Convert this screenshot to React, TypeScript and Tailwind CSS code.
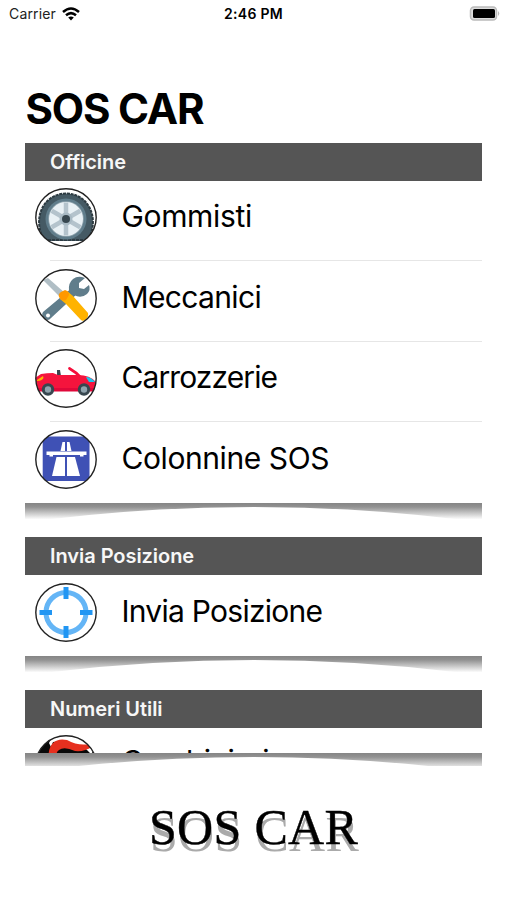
import React from 'react';

const IconCircle = ({ id, children }: { id: string; children: React.ReactNode }) => (
  <svg viewBox="0 0 62 59" className="w-[62px] h-[59px] shrink-0">
    <clipPath id={id}>
      <ellipse cx="31" cy="29.5" rx="30.2" ry="28.8" />
    </clipPath>
    <g clipPath={`url(#${id})`}>{children}</g>
    <ellipse cx="31" cy="29.5" rx="30.2" ry="28.7" fill="none" stroke="#222" strokeWidth="1.4" />
  </svg>
);

const TyreIcon = () => (
  <IconCircle id="tyre">
    <path d="M10 53 C-3 34 6 6 31 5.500 C56 6 65 34 52 53Z" fill="#455a64" />
    <path d="M10 53 C-3 34 6 6 31 5.500 C56 6 65 34 52 53" fill="none" stroke="#2c3a41" strokeWidth="2" strokeDasharray="3 0.8" />
    <path d="M13 52H49" stroke="#263238" strokeWidth="1.5" strokeDasharray="3 1" />
    <circle cx="31" cy="31" r="20.5" fill="#607d8b" />
    <circle cx="31" cy="31" r="17.8" fill="#90a4ae" />
    <circle cx="31" cy="31" r="17" fill="#e9f1f5" />
    <path d="M31 14.500V47.500M16.700 22.700L45.300 39.300M16.700 39.300L45.300 22.700" stroke="#b4c3cc" strokeWidth="4.5" />
    <circle cx="31" cy="31" r="6.5" fill="#a9bac4" />
    <circle cx="31" cy="31" r="4" fill="#37474f" />
  </IconCircle>
);

const ToolsIcon = () => (
  <IconCircle id="tools">
    <path d="M8 11L13 9L30 24L26 29Z" fill="#b0bec5" />
    <path d="M38 18L8 43Q6 46 9 49Q13 53 16 49L43 24Z" fill="#607d8b" />
    <path d="M50 9L44 14L44 19L49 20L54 16Q56 21 52 25Q46 30 39 26L34 22Q33 14 38 10Q43 6 50 9Z" fill="#607d8b" />
    <circle cx="13" cy="46.5" r="2" fill="#fff" />
    <path d="M25 30L32 22L38 27L53 44Q54 48 50 51Q47 53 45 50L31 35Z" fill="#ffb300" />
    <path d="M24 28Q23 25 26 23L30 21Q34 22 34 26L31 31Q27 33 24 28Z" fill="#ff9800" />
  </IconCircle>
);

const CarIcon = () => (
  <IconCircle id="car">
    <path d="M22 21L25 21L26 27H22Z" fill="#37474f" />
    <path d="M34.500 19.500Q41 23 46 29" fill="none" stroke="#f50f3c" strokeWidth="2.8" strokeLinecap="round" />
    <path d="M0 29L6 25Q12 24 18 24L23 26H43Q55 26 61 33V42H1Z" fill="#f5143d" />
    <path d="M1 39H61V42.500H3Z" fill="#e0083a" />
    <path d="M2 31L8 27L8.500 29Q7 32 2 32Z" fill="#ffb300" />
    <path d="M51 28Q56 28 60 33L54 33Z" fill="#18c7ed" />
    <circle cx="13" cy="40.5" r="6.2" fill="#37474f" />
    <circle cx="49" cy="40.5" r="6.2" fill="#37474f" />
    <circle cx="13" cy="40.5" r="3.2" fill="#90a4ae" />
    <circle cx="49" cy="40.5" r="3.2" fill="#90a4ae" />
  </IconCircle>
);

const HighwayIcon = () => (
  <IconCircle id="highway">
    <rect x="7.7" y="6.5" width="46.8" height="44.5" fill="#3f51b5" />
    <g fill="#fff">
      <path d="M27.500 12H30V21H25.500Z" />
      <path d="M32 12H34.500L36.500 21H32Z" />
      <path d="M11.500 21.500H51.500V25H48.500V26.500H45V25H18V26.500H14.500V25H11.500Z" />
      <path d="M21.500 27H30V46H17Z" />
      <path d="M32 27H40L45 46H32Z" />
    </g>
  </IconCircle>
);

const TargetIcon = () => (
  <IconCircle id="target">
    <circle cx="31" cy="29.5" r="20" fill="none" stroke="#64b5f6" strokeWidth="5" />
    <path d="M31 4V16M31 43V55M4.500 29.500H17M45 29.500H57.500" stroke="#2196f3" strokeWidth="5" />
  </IconCircle>
);

const FlameIcon = () => (
  <IconCircle id="flame">
    <rect width="62" height="59" fill="#090909" />
    <path d="M14 8L18 0H50L60 14L56 19L50 13L40 10L28 6L18 7L16 12Z" fill="#fff" />
    <path d="M13.500 24Q13 13 18 8Q23 3 32 5Q43 11 54 9L57 12Q49 17 40 16Q29 11 24 15Q20 18 22 24Z" fill="#e6301f" />
  </IconCircle>
);

const SectionTitle = ({ title }: { title: string }) => (
  <h2 className="h-[38px] shrink-0 bg-[#555] pl-[25px] text-[20px] leading-[38px] font-semibold tracking-[-0.05px] text-[#f7f7f7]">
    {title}
  </h2>
);

const Row = ({ icon, label, text }: { icon: React.ReactNode; label: string; text: string }) => (
  <div className="flex h-[80.6px] shrink-0 items-start pt-[7.5px] pl-[9.5px]">
    {icon}
    <span className={`ml-[25px] text-[30px] leading-[40px] whitespace-nowrap ${text}`}>{label}</span>
  </div>
);

const Divider = () => <div className="-mt-px ml-[25px] h-px shrink-0 bg-[#e6e6e6]" />;

const Shadow = ({ id }: { id: string }) => (
  <svg viewBox="0 0 457 16" className="block h-[16px] w-[457px] shrink-0">
    <linearGradient id={id} x1="0" y1="0" x2="0" y2="16" gradientUnits="userSpaceOnUse">
      <stop offset="0" stopColor="#858585" />
      <stop offset="0.25" stopColor="#929292" />
      <stop offset="1" stopColor="#fbfbfb" />
    </linearGradient>
    <path d="M0 0H457V16H430Q229 -8 27 16H0Z" fill={`url(#${id})`} />
  </svg>
);

const StatusBar = () => (
  <div className="flex h-[27px] items-center justify-between pr-[7px] pl-[9px] text-[14px]">
    <div className="flex w-[160px] items-center gap-1.5">
      <span className="tracking-[0.15px] text-[#222]">Carrier</span>
      <svg viewBox="0 0 18 14" className="h-[14px] w-[18px]" fill="none" stroke="#000" strokeWidth="2.5">
        <path d="M1 5Q9 -2 17 5M4 8.300Q9 4 14 8.300" />
        <path d="M6.200 10.600Q9 8.500 11.800 10.600L9 13.500Z" fill="#000" stroke="none" />
      </svg>
    </div>
    <span className="font-semibold tracking-[0.3px] whitespace-nowrap">2:46 PM</span>
    <div className="flex w-[162px] justify-end">
      <svg viewBox="0 0 31 15" className="h-[15px] w-[31px]">
        <rect x="1.5" y="1" width="26" height="13" rx="3.5" fill="#ddd" stroke="#bbb" strokeWidth="1.5" />
        <rect x="4" y="3" width="22" height="9" rx="1.5" fill="#000" />
        <path d="M29 5Q31.500 7.500 29 10Z" fill="#bbb" />
      </svg>
    </div>
  </div>
);

const App = () => {
  return (
    <main className="flex h-[900px] w-[507px] flex-col overflow-hidden bg-white font-['Inter',sans-serif] text-black">
      <StatusBar />
      <h1 className="mt-[57px] ml-[25.5px] text-[42px] leading-[50px] font-bold tracking-[-1.2px]">SOS CAR</h1>

      <div className="mt-[8.5px] ml-[25px] flex h-[610.5px] w-[457px] flex-col overflow-hidden">
        <SectionTitle title="Officine" />
        <Row icon={<TyreIcon />} label="Gommisti" text="pt-[8px] tracking-[-0.35px]" />
        <Divider />
        <Row icon={<ToolsIcon />} label="Meccanici" text="pt-[8px] tracking-[-0.65px]" />
        <Divider />
        <Row icon={<CarIcon />} label="Carrozzerie" text="pt-[8px] tracking-[-0.9px]" />
        <Divider />
        <Row icon={<HighwayIcon />} label="Colonnine SOS" text="pt-[8px] tracking-[-0.42px]" />
        <Shadow id="shadow-officine" />

        <div className="h-[18.5px] shrink-0" />
        <SectionTitle title="Invia Posizione" />
        <Row icon={<TargetIcon />} label="Invia Posizione" text="pt-[8px] tracking-[-0.74px]" />
        <Shadow id="shadow-posizione" />

        <div className="h-[18px] shrink-0" />
        <SectionTitle title="Numeri Utili" />
        <Row icon={<FlameIcon />} label="Carabinieri" text="pt-[6px] tracking-[-0.6px]" />
      </div>
      <div className="ml-[25px] h-[13px] shrink-0 overflow-hidden">
        <Shadow id="shadow-list" />
      </div>

      <div className="mt-[31px] ml-[149px] font-['Liberation_Serif',serif] text-[50px] leading-[60px] tracking-[0.3px] whitespace-nowrap [-webkit-text-stroke:0.4px_#000] [text-shadow:1px_7px_0_#aaa]">
        SOS CAR
      </div>
    </main>
  );
};

export default App;
